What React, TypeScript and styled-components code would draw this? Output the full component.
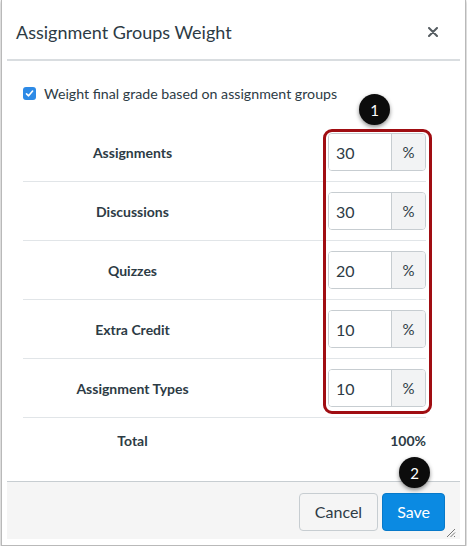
import {FC} from 'react'
import styled, {createGlobalStyle} from 'styled-components'

const GlobalStyle = createGlobalStyle`
  html, body {
    margin: 0;
    padding: 0;
    background: #ffffff;
  }
  body {
    font-family: Lato, "Liberation Sans", sans-serif;
    color: #2D3B45;
  }
`

const Frame = styled.div`
  position: relative;
  box-sizing: border-box;
  width: 465px;
  height: 546px;
  margin-left: 1px;
  background: #ffffff;
  border: 1px solid #b9b9b9;
  border-top: none;
  box-shadow: 0 1px 3px rgba(0, 0, 0, 0.35);
  padding: 0 5px 6px 5px;
`

const Dialog = styled.div`
  position: relative;
  height: 100%;
  display: flex;
  flex-direction: column;
`

const Header = styled.div`
  height: 61px;
  display: flex;
  align-items: center;
  justify-content: space-between;
  padding: 5px 19px 0 9px;
  box-sizing: border-box;
  border-bottom: 2px solid #d9dde0;
`

const Title = styled.h1`
  margin: 0;
  font-size: 18px;
  font-weight: 400;
  color: #2D3B45;
`

const CloseButton = styled.button`
  width: 16px;
  height: 16px;
  padding: 0;
  border: none;
  background: none;
  display: flex;
  align-items: center;
  justify-content: center;
  cursor: pointer;
`

const Body = styled.div`
  flex: 1;
  padding: 21px 34px 0 16px;
`

const CheckRow = styled.label`
  display: flex;
  align-items: center;
  gap: 8px;
  height: 22px;
  font-size: 14.2px;
  color: #2D3B45;
  margin-bottom: 19px;
`

const CheckBox = styled.span`
  width: 13px;
  height: 13px;
  border-radius: 3px;
  background: #2d8ae6;
  display: flex;
  align-items: center;
  justify-content: center;
`

const Rows = styled.div`
  position: relative;
`

const Row = styled.div<{total?: boolean}>`
  display: grid;
  grid-template-columns: 219px 1fr;
  align-items: center;
  height: ${({total}) => total ? '44px' : '58px'};
  border-bottom: ${({total}) => total ? 'none' : '1px solid #e1e5e8'};
`

const Label = styled.div`
  text-align: center;
  font-weight: 700;
  font-size: 14px;
  color: #2D3B45;
`

const Value = styled.div`
  justify-self: end;
  font-weight: 700;
  font-size: 14px;
`

const InputGroup = styled.div`
  justify-self: end;
  display: flex;
  height: 38px;
  box-sizing: border-box;
  border: 1px solid #c7cdd1;
  border-radius: 4px;
  overflow: hidden;
`

const NumberInput = styled.input`
  width: 62px;
  box-sizing: border-box;
  border: none;
  outline: none;
  padding: 0 0 0 7px;
  font-family: Lato, "Liberation Sans", sans-serif;
  font-size: 16px;
  color: #2D3B45;
  background: #ffffff;
`

const Addon = styled.span`
  width: 33px;
  border-left: 1px solid #c7cdd1;
  background: #f2f3f4;
  display: flex;
  align-items: center;
  justify-content: center;
  font-size: 15px;
  color: #2D3B45;
`

const Highlight = styled.div`
  position: absolute;
  left: 300px;
  top: 6px;
  width: 109px;
  height: 285px;
  box-sizing: border-box;
  border: 3.5px solid #a00d12;
  border-radius: 9px;
  pointer-events: none;
`

const Badge = styled.div<{left: number, top: number}>`
  position: absolute;
  left: ${({left}) => left}px;
  top: ${({top}) => top}px;
  width: 31px;
  height: 31px;
  border-radius: 50%;
  background: #0c0c0c;
  color: #ffffff;
  font-size: 15px;
  display: flex;
  align-items: center;
  justify-content: center;
  box-shadow: 0 2px 4px rgba(0, 0, 0, 0.45);
  z-index: 2;
`

const Footer = styled.div`
  position: relative;
  height: 58px;
  box-sizing: border-box;
  background: #f5f5f5;
  border-top: 1px solid #c7cdd1;
  display: flex;
  align-items: center;
  justify-content: flex-end;
  gap: 4px;
  padding: 2px 15px 0 0;
`

const Button = styled.button<{primary?: boolean}>`
  height: 38px;
  padding: 0 ${({primary}) => primary ? '14px' : '15px'};
  border-radius: 4px;
  font-family: Lato, "Liberation Sans", sans-serif;
  font-size: 16px;
  cursor: pointer;
  background: ${({primary}) => primary ? '#0b8ae2' : '#f5f5f5'};
  color: ${({primary}) => primary ? '#ffffff' : '#2D3B45'};
  border: 1px solid ${({primary}) => primary ? '#0779c9' : '#c7cdd1'};
`

const Grip = styled.svg`
  position: absolute;
  right: 4px;
  bottom: 1px;
`

const groups = [
  {name: 'Assignments', weight: 30},
  {name: 'Discussions', weight: 30},
  {name: 'Quizzes', weight: 20},
  {name: 'Extra Credit', weight: 10},
  {name: 'Assignment Types', weight: 10},
]

const App: FC = () => (
  <>
    <GlobalStyle />
    <Frame>
      <Dialog>
        <Header>
          <Title>Assignment Groups Weight</Title>
          <CloseButton aria-label="Close">
            <svg width="10" height="10" viewBox="0 0 10 10">
              <path d="M1 1 L9 9 M9 1 L1 9" stroke="#555c61" strokeWidth="2" strokeLinecap="round" />
            </svg>
          </CloseButton>
        </Header>
        <Body>
          <CheckRow>
            <CheckBox>
              <svg width="9" height="9" viewBox="0 0 9 9">
                <path d="M1.5 4.8 L3.6 6.8 L7.6 2" stroke="#ffffff" strokeWidth="1.6" fill="none" strokeLinecap="round" strokeLinejoin="round" />
              </svg>
            </CheckBox>
            Weight final grade based on assignment groups
          </CheckRow>
          <Rows>
            <Badge left={336} top={-29}>1</Badge>
            <Highlight />
            {groups.map(g => (
              <Row key={g.name}>
                <Label>{g.name}</Label>
                <InputGroup>
                  <NumberInput defaultValue={g.weight} />
                  <Addon>%</Addon>
                </InputGroup>
              </Row>
            ))}
            <Row total>
              <Label>Total</Label>
              <Value>100%</Value>
            </Row>
          </Rows>
        </Body>
        <Badge left={392} top={457}>2</Badge>
        <Footer>
          <Button>Cancel</Button>
          <Button primary>Save</Button>
          <Grip width="12" height="12" viewBox="0 0 12 12">
            <path d="M11 3 L3 11 M11 6.5 L6.5 11 M11 10 L10 11" stroke="#777" strokeWidth="1" />
          </Grip>
        </Footer>
      </Dialog>
    </Frame>
  </>
)

export default App
